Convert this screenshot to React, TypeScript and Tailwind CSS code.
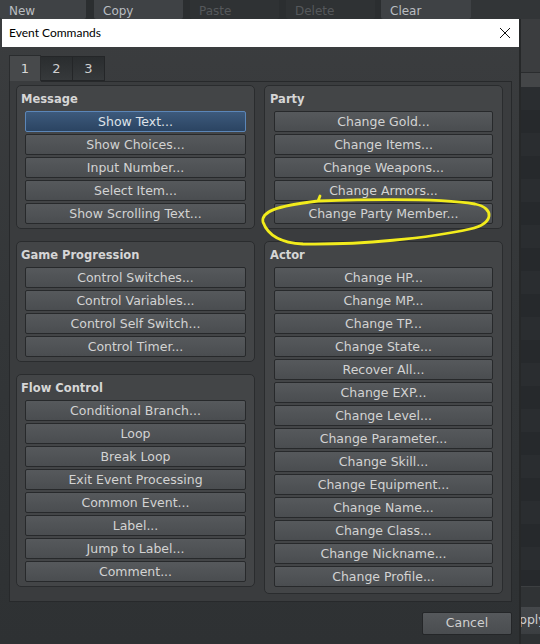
import React from "react";

const FONT = "font-['DejaVu_Sans',sans-serif]";

function Btn({ label, selected = false }: { label: string; selected?: boolean }) {
  return (
    <div
      className={
        "h-[21px] shrink-0 rounded-[2px] border flex items-center justify-center pt-[1px] text-[12.5px] leading-none " +
        (selected
          ? "border-[#5b86b8] bg-gradient-to-b from-[#3d5a7c] to-[#2b4462] text-[#dfe3e8]"
          : "border-[#27292b] bg-gradient-to-b from-[#56595c] to-[#4a4d50] text-[#d3d3d3]")
      }
    >
      {label}
    </div>
  );
}

function Group({
  title,
  items,
  selectedIndex = -1,
  className = "",
  padX = "px-[8px]",
}: {
  title: string;
  items: string[];
  selectedIndex?: number;
  className?: string;
  padX?: string;
}) {
  return (
    <div
      className={
        "rounded-[5px] border border-[#2a2c2e] bg-[#434547] pt-[4px] pb-[4px] flex flex-col " +
        padX +
        " " +
        className
      }
    >
      <div className="h-[18px] leading-[18px] mb-[3px] -ml-[4px] text-[11.5px] font-bold text-[#d6d6d6]">
        {title}
      </div>
      <div className="flex flex-col gap-[2px]">
        {items.map((it, i) => (
          <Btn key={it} label={it} selected={i === selectedIndex} />
        ))}
      </div>
    </div>
  );
}

function ToolBtn({ label, disabled = false, w }: { label: string; disabled?: boolean; w: string }) {
  return (
    <div
      className={
        "h-[19px] shrink-0 flex items-end pb-[2px] pl-[9px] text-[12px] leading-none rounded-b-[2px] " +
        w +
        " " +
        (disabled ? "bg-[#2f3234] text-[#55585b]" : "bg-[#3f4245] text-[#b9bdc1]")
      }
    >
      {label}
    </div>
  );
}

export default function App() {
  const stripes = Array.from({ length: 22 });
  return (
    <div className={"relative w-[540px] h-[644px] overflow-hidden bg-[#2c2f31] " + FONT}>
      {/* background toolbar */}
      <div className="h-[19px] flex bg-[#2b2e30]">
        <ToolBtn label="New" w="w-[86px]" />
        <div className="w-[8px]" />
        <ToolBtn label="Copy" w="w-[89px]" />
        <div className="w-[7px]" />
        <ToolBtn label="Paste" disabled w="w-[89px]" />
        <div className="w-[7px]" />
        <ToolBtn label="Delete" disabled w="w-[89px]" />
        <div className="w-[6px]" />
        <ToolBtn label="Clear" w="w-[90px]" />
        <div className="flex-1 bg-[#323537]" />
      </div>

      <div className="flex h-[625px]">
        {/* dialog */}
        <div className="w-[521px] shrink-0 flex flex-col border-r-[2px] border-[#262829] bg-gradient-to-b from-[#3b3d3f] via-[#333638] to-[#2e3133]">
          <div className="h-[28px] ml-[2px] bg-white flex items-center justify-between pl-[7px] pr-[8px] font-['Lato',sans-serif] text-[12px] text-black">
            <span>Event Commands</span>
            <svg width="12" height="12" viewBox="0 0 12 12">
              <path d="M1 1 L11 11 M11 1 L1 11" stroke="#111" strokeWidth="1" fill="none" />
            </svg>
          </div>

          {/* tabs */}
          <div className="mt-[8px] ml-[9px] flex h-[26px]">
            <div className="w-[32px] h-[26px] bg-[#47494b] border border-b-0 border-[#2a2c2e] flex items-center justify-center text-[13px] text-[#d8d8d8]">
              1
            </div>
            <div className="w-[32px] h-[25px] mt-[1px] bg-gradient-to-b from-[#2a2d2f] to-[#36393b] border border-l-0 border-[#242628] flex items-center justify-center text-[13px] text-[#cfcfcf]">
              2
            </div>
            <div className="w-[32px] h-[25px] mt-[1px] bg-gradient-to-b from-[#2a2d2f] to-[#36393b] border border-l-0 border-[#242628] flex items-center justify-center text-[13px] text-[#cfcfcf]">
              3
            </div>
          </div>

          {/* panel */}
          <div className="ml-[9px] w-[503px] h-[521px] border border-t-0 border-[#27292b] bg-[#3a3c3e] relative">
            <div className="absolute left-[-1px] right-[-1px] top-0 h-px bg-[#27292b] ml-[32px]" />
            <div className="flex pt-[4px] pl-[6px] gap-[9px]">
              <div className="w-[239px] flex flex-col">
                <Group
                  title="Message"
                  selectedIndex={0}
                  items={["Show Text...", "Show Choices...", "Input Number...", "Select Item...", "Show Scrolling Text..."]}
                />
                <Group
                  title="Game Progression"
                  className="mt-[12px]"
                  items={["Control Switches...", "Control Variables...", "Control Self Switch...", "Control Timer..."]}
                />
                <Group
                  title="Flow Control"
                  className="mt-[12px]"
                  items={[
                    "Conditional Branch...",
                    "Loop",
                    "Break Loop",
                    "Exit Event Processing",
                    "Common Event...",
                    "Label...",
                    "Jump to Label...",
                    "Comment...",
                  ]}
                />
              </div>
              <div className="w-[239px] flex flex-col">
                <Group
                  title="Party"
                  padX="px-[9px]"
                  items={["Change Gold...", "Change Items...", "Change Weapons...", "Change Armors...", "Change Party Member..."]}
                />
                <Group
                  title="Actor"
                  padX="px-[9px]"
                  className="mt-[12px] pb-[6px]"
                  items={[
                    "Change HP...",
                    "Change MP...",
                    "Change TP...",
                    "Change State...",
                    "Recover All...",
                    "Change EXP...",
                    "Change Level...",
                    "Change Parameter...",
                    "Change Skill...",
                    "Change Equipment...",
                    "Change Name...",
                    "Change Class...",
                    "Change Nickname...",
                    "Change Profile...",
                  ]}
                />
              </div>
            </div>
          </div>

          {/* bottom */}
          <div className="flex justify-end pr-[7px] pt-[10px]">
            <div className="w-[90px] h-[23px] rounded-[2px] border border-[#242628] bg-gradient-to-b from-[#55585b] to-[#4a4d50] flex items-center justify-center text-[12.5px] text-[#d0d0d0]">
              Cancel
            </div>
          </div>
        </div>

        {/* right background strip */}
        <div className="flex-1 flex flex-col">
          <div className="h-[54px] shrink-0 bg-[#3b3d3f] border-b border-[#2a2c2e]" />
          <div className="h-[14px] shrink-0 bg-[#444648]" />
          <div className="h-[499px] shrink-0 flex flex-col overflow-hidden">
            {stripes.map((_, i) => (
              <div key={i} className={"h-[23px] shrink-0 " + (i % 2 === 0 ? "bg-[#2a2d30]" : "bg-[#26292c]")} />
            ))}
          </div>
          <div className="h-[21px] shrink-0 bg-[#303335] border-t border-[#3c3f41]" />
          <div className="h-[27px] shrink-0 bg-gradient-to-b from-[#45484b] to-[#3b3e41] rounded-r-[2px] flex items-center text-[12.5px] text-[#d0d0d0] overflow-hidden">
            <span className="-ml-[2px]">pply</span>
          </div>
          <div className="flex-1 bg-[#2e3133]" />
        </div>
      </div>

      {/* yellow annotation */}
      <svg className="absolute inset-0 pointer-events-none" width="540" height="644" viewBox="0 0 540 644">
        <path
          d="M 320 196 L 318 201 C 380 199, 445 199, 475 204 C 495 208, 494 224, 470 229 C 430 238, 360 245, 303 244 C 282 243, 268 236, 263 222 C 261 212, 275 206, 318 201"
          fill="none"
          stroke="#f2ec1c"
          strokeWidth="2.8"
          strokeLinecap="round"
          strokeLinejoin="round"
        />
      </svg>
    </div>
  );
}
